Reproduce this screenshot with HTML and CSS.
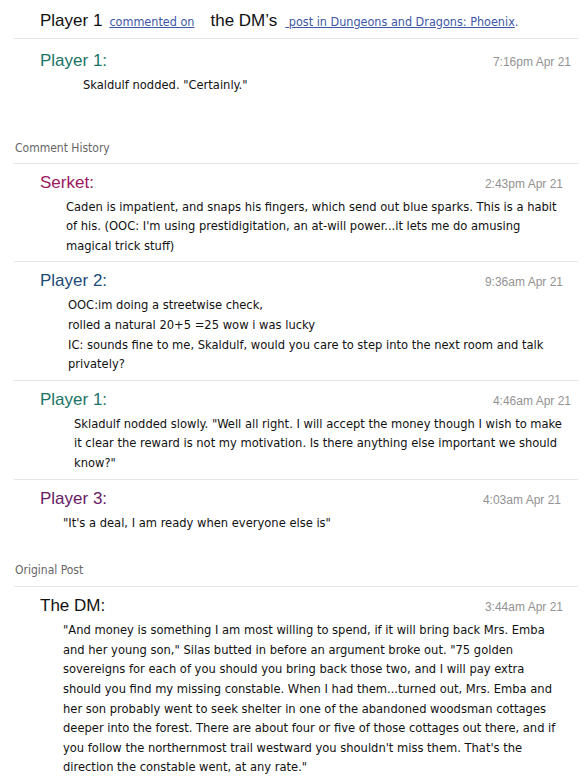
FILE: index.html
```html
<!DOCTYPE html>
<html>
<head>
<meta charset="utf-8">
<link rel="stylesheet" href="styles.css">
</head>
<body>
<div class="page">
  <div class="headline">
    <span class="who">Player 1</span>
    <a class="link link-commented" href="#">commented on</a>
    <span class="who who-dm">the DM’s</span>
    <a class="link link-post" href="#"> post in Dungeons and Dragons: Phoenix</a><span class="dot">.</span>
  </div>

  <div class="comment c-top">
    <div class="comment-head">
      <span class="name green">Player 1:</span>
      <span class="time t-a">7:16pm Apr 21</span>
    </div>
    <div class="body b-83">Skaldulf nodded. "Certainly."</div>
  </div>

  <div class="section-label sl-history">Comment History</div>

  <div class="comment c-hist">
    <div class="comment-head">
      <span class="name pink">Serket:</span>
      <span class="time t-b">2:43pm Apr 21</span>
    </div>
    <div class="body b-66">Caden is impatient, and snaps his fingers, which send out blue sparks. This is a habit<br>of his. (OOC: I'm using prestidigitation, an at-will power...it lets me do amusing<br>magical trick stuff)</div>
  </div>

  <div class="comment c-hist">
    <div class="comment-head">
      <span class="name blue">Player 2:</span>
      <span class="time t-b">9:36am Apr 21</span>
    </div>
    <div class="body b-68">OOC:im doing a streetwise check,<br>rolled a natural 20+5 =25 wow i was lucky<br>IC: sounds fine to me, Skaldulf, would you care to step into the next room and talk<br>privately?</div>
  </div>

  <div class="comment c-hist">
    <div class="comment-head">
      <span class="name green">Player 1:</span>
      <span class="time t-a">4:46am Apr 21</span>
    </div>
    <div class="body b-74">Skladulf nodded slowly. "Well all right. I will accept the money though I wish to make<br>it clear the reward is not my motivation. Is there anything else important we should<br>know?"</div>
  </div>

  <div class="comment c-hist c-last">
    <div class="comment-head">
      <span class="name purple">Player 3:</span>
      <span class="time t-c">4:03am Apr 21</span>
    </div>
    <div class="body b-63">"It's a deal, I am ready when everyone else is"</div>
  </div>

  <div class="section-label sl-original">Original Post</div>

  <div class="comment c-hist c-last">
    <div class="comment-head">
      <span class="name black">The DM:</span>
      <span class="time t-b">3:44am Apr 21</span>
    </div>
    <div class="body b-63">"And money is something I am most willing to spend, if it will bring back Mrs. Emba<br>and her young son," Silas butted in before an argument broke out. "75 golden<br>sovereigns for each of you should you bring back those two, and I will pay extra<br>should you find my missing constable. When I had them...turned out, Mrs. Emba and<br>her son probably went to seek shelter in one of the abandoned woodsman cottages<br>deeper into the forest. There are about four or five of those cottages out there, and if<br>you follow the northernmost trail westward you shouldn't miss them. That's the<br>direction the constable went, at any rate."</div>
  </div>
</div>
</body>
</html>
```

FILE: styles.css
```css
html, body {
  margin: 0;
  padding: 0;
  background: #ffffff;
  overflow: hidden;
}
.page {
  padding: 0 7px 0 14px;
  font-family: "DejaVu Sans Condensed", "DejaVu Sans", sans-serif;
  color: #111;
}
.headline {
  display: flex;
  align-items: baseline;
  padding: 11px 0 7px 26px;
  border-bottom: 1px solid #e6e6e6;
  font-family: "Liberation Sans", Arial, sans-serif;
}
.who {
  font-size: 17px;
  color: #111;
}
.who-dm {
  margin-left: 16px;
}
.link {
  font-family: "DejaVu Sans Condensed", sans-serif;
  font-size: 12.5px;
  color: #3d57a6;
  text-decoration: underline;
  white-space: pre;
}
.link-commented {
  margin-left: 7px;
}
.link-post {
  margin-left: 8px;
}
.dot {
  font-family: "DejaVu Sans Condensed", sans-serif;
  font-size: 12.5px;
  color: #3d57a6;
}
.comment-head {
  display: flex;
  justify-content: space-between;
  align-items: baseline;
  padding-left: 26px;
  margin-bottom: 4px;
}
.name {
  font-family: "Liberation Sans", Arial, sans-serif;
  font-size: 17px;
}
.green { color: #1a7467; }
.pink { color: #9c1860; }
.blue { color: #1c4b78; }
.purple { color: #661a66; }
.black { color: #111; }
.time {
  font-family: "Liberation Sans", Arial, sans-serif;
  font-size: 12px;
  color: #939393;
}
.t-a { margin-right: 7px; }
.t-b { margin-right: 15px; }
.t-c { margin-right: 17px; }
.body {
  font-size: 12.8px;
  line-height: 19.6px;
  white-space: nowrap;
}
.b-83 { padding-left: 69px; }
.b-66 { padding-left: 52px; }
.b-68 { padding-left: 54px; }
.b-74 { padding-left: 60px; }
.b-63 { padding-left: 49px; }
.c-top {
  padding-top: 12px;
  padding-bottom: 46px;
}
.c-hist {
  padding-top: 9px;
  padding-bottom: 6px;
  border-bottom: 1px solid #e6e6e6;
}
.c-last {
  border-bottom: none;
}
.section-label {
  font-size: 12px;
  color: #666;
  padding: 0 0 8px 1px;
  border-bottom: 1px solid #e6e6e6;
}
.sl-original {
  margin-top: 25px;
  padding-bottom: 9px;
}
```
